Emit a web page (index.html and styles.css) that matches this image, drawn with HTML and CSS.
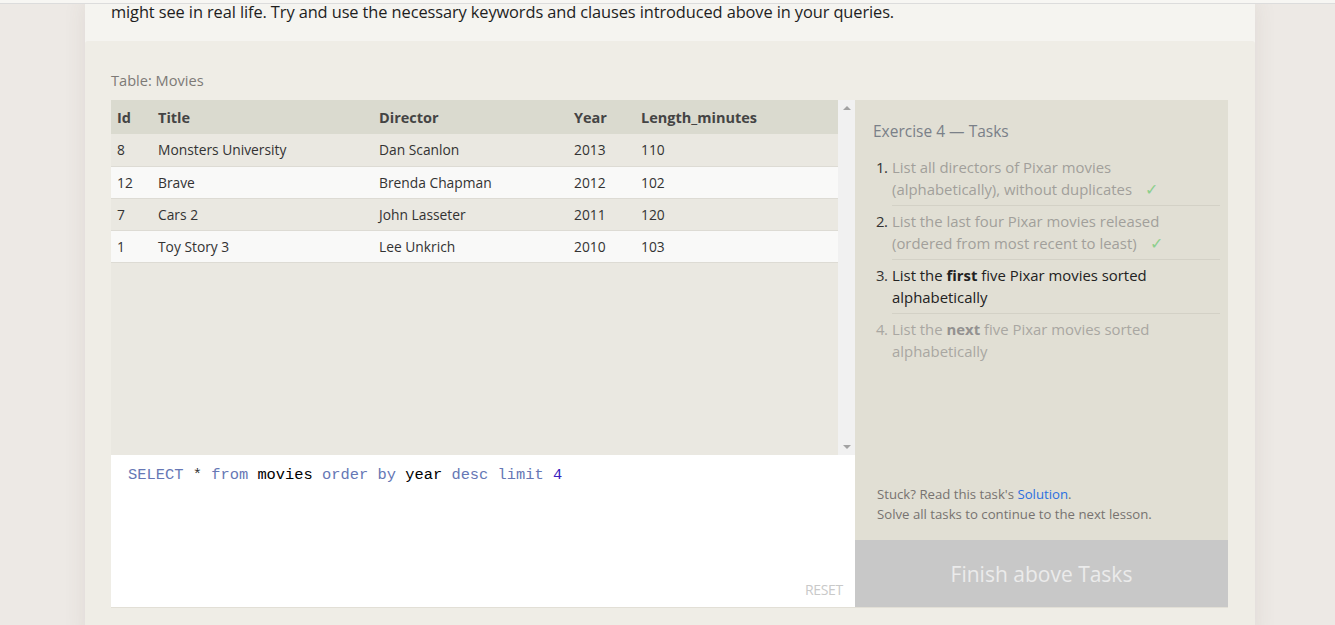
FILE: index.html
```html
<!DOCTYPE html>
<html>
<head>
<meta charset="utf-8">
<link rel="stylesheet" href="styles.css">
</head>
<body>
<div class="topbar"></div>
<div class="page">
  <p class="intro">might see in real life. Try and use the necessary keywords and clauses introduced above in your queries.</p>
  <section class="exercise">
    <div class="table-label">Table: Movies</div>
    <div class="workspace">
      <div class="left">
        <div class="results">
          <div class="table-wrap">
            <table class="movies">
              <thead>
                <tr><th class="c-id">Id</th><th class="c-title">Title</th><th class="c-dir">Director</th><th class="c-year">Year</th><th>Length_minutes</th></tr>
              </thead>
              <tbody>
                <tr><td>8</td><td>Monsters University</td><td>Dan Scanlon</td><td>2013</td><td>110</td></tr>
                <tr><td>12</td><td>Brave</td><td>Brenda Chapman</td><td>2012</td><td>102</td></tr>
                <tr><td>7</td><td>Cars 2</td><td>John Lasseter</td><td>2011</td><td>120</td></tr>
                <tr><td>1</td><td>Toy Story 3</td><td>Lee Unkrich</td><td>2010</td><td>103</td></tr>
              </tbody>
            </table>
          </div>
          <div class="scrollbar">
            <span class="arrow up"></span>
            <span class="arrow down"></span>
          </div>
        </div>
        <div class="editor">
          <div class="code"><span class="kw">SELECT</span> <span class="op">*</span> <span class="kw">from</span> <span class="id">movies</span> <span class="kw">order by</span> <span class="id">year</span> <span class="kw">desc</span> <span class="kw">limit</span> <span class="num">4</span></div>
          <div class="reset">RESET</div>
        </div>
      </div>
      <aside class="tasks">
        <div class="tasks-body">
          <h2 class="tasks-title">Exercise 4 — Tasks</h2>
          <ol class="task-list">
            <li class="done"><span class="n">1.</span><span class="t">List all directors of Pixar movies<br>(alphabetically), without duplicates <span class="check">✓</span></span></li>
            <li class="done"><span class="n">2.</span><span class="t">List the last four Pixar movies released<br>(ordered from most recent to least) <span class="check">✓</span></span></li>
            <li class="current"><span class="n">3.</span><span class="t">List the <b>first</b> five Pixar movies sorted<br>alphabetically</span></li>
            <li class="todo"><span class="n">4.</span><span class="t">List the <b>next</b> five Pixar movies sorted<br>alphabetically</span></li>
          </ol>
          <div class="help">
            <div>Stuck? Read this task's <a class="link">Solution</a>.</div>
            <div>Solve all tasks to continue to the next lesson.</div>
          </div>
        </div>
        <div class="finish">Finish above Tasks</div>
      </aside>
    </div>
  </section>
</div>
</body>
</html>
```

FILE: styles.css
```css
* { box-sizing: border-box; }
html, body {
  margin: 0;
  padding: 0;
  height: 100%;
  overflow: hidden;
}
body {
  background: #ede9e5;
  font-family: "Open Sans", "Noto Sans", sans-serif;
  color: #222;
}
.topbar {
  position: fixed;
  top: 0;
  left: 0;
  right: 0;
  height: 4px;
  background: #f7f6f3;
  border-bottom: 1px solid #dcdcdc;
  z-index: 5;
}
.page {
  width: 1170px;
  margin-left: 85px;
  background: #f5f4f0;
  box-shadow: 0 0 22px rgba(90, 70, 60, 0.09);
  min-height: 100%;
}
.intro {
  margin: 0;
  padding: 0 26px;
  height: 41px;
  font-size: 16.4px;
  line-height: 24px;
  color: #1e1e1e;
  letter-spacing: -0.1px;
  white-space: nowrap;
}
.exercise {
  background: #efede6;
  padding: 29px 27px 0 26px;
  border-radius: 3px 3px 0 0;
  min-height: 600px;
}
.table-label {
  font-size: 14.6px;
  line-height: 20px;
  color: #7d7a76;
  margin-bottom: 10px;
}
.workspace {
  display: flex;
  height: 508px;
  border-bottom: 1px solid #e2dfd6;
}
.left {
  width: 744px;
  display: flex;
  flex-direction: column;
}
.results {
  display: flex;
  height: 355px;
  background: #eae8e1;
}
.table-wrap {
  flex: 1;
}
.movies {
  width: 100%;
  border-collapse: collapse;
  font-size: 13.8px;
  color: #333;
}
.movies th {
  background: #dadacf;
  text-align: left;
  font-weight: 700;
  color: #444;
  height: 34px;
  padding: 1px 6px 0;
  font-size: 14.5px;
}
.movies td {
  height: 32px;
  padding: 0 6px;
  border-bottom: 1px solid #dddbd4;
}
.movies tbody tr:nth-child(odd) td { background: #eae8e1; }
.movies tbody tr:nth-child(even) td { background: #f9f9f8; }
.c-id { width: 41px; }
.c-title { width: 221px; }
.c-dir { width: 195px; }
.c-year { width: 67px; }
.scrollbar {
  width: 17px;
  background: #f1f1f1;
  display: flex;
  flex-direction: column;
  justify-content: space-between;
  align-items: center;
  padding: 6px 0 6px;
}
.arrow {
  width: 0;
  height: 0;
  border-left: 4px solid transparent;
  border-right: 4px solid transparent;
}
.arrow.up { border-bottom: 4px solid #a3a3a3; }
.arrow.down { border-top: 4px solid #a3a3a3; }
.editor {
  flex: 1;
  background: #fff;
  position: relative;
  padding: 10px 17px;
}
.code {
  font-family: "Liberation Mono", "DejaVu Sans Mono", monospace;
  font-size: 15.4px;
  line-height: 20px;
  color: #000;
}
.kw { color: #6677b5; }
.op { color: #333; }
.id { color: #000; }
.num { color: #3a1fc0; }
.reset {
  position: absolute;
  right: 12px;
  bottom: 8px;
  font-size: 14px;
  color: #c9c9c9;
  letter-spacing: -0.3px;
}
.tasks {
  width: 373px;
  background: #e1dfd4;
  display: flex;
  flex-direction: column;
}
.tasks-body {
  flex: 1;
  padding: 20px 8px 0 18px;
  display: flex;
  flex-direction: column;
}
.tasks-title {
  margin: 0 0 14px;
  font-size: 15.5px;
  line-height: 22px;
  font-weight: 400;
  color: #7a8088;
}
.task-list {
  list-style: none;
  margin: 0;
  padding: 0;
  font-size: 14.9px;
  line-height: 22px;
}
.task-list li {
  display: flex;
  padding-left: 3px;
  margin-bottom: 4px;
}
.task-list li .t {
  flex: 1;
  padding-bottom: 5px;
  border-bottom: 1px solid #d3d1c6;
  white-space: nowrap;
}
.task-list li:last-child .t { border-bottom: 0; }
.n { width: 16px; flex: none; color: #333; letter-spacing: -0.5px; }
.done .t { color: #a19f9b; }
.current .t { color: #222; }
.current b { color: #222; }
.todo .n, .todo .t { color: #a9a7a2; }
.done b, .todo b { color: #939190; }
.check {
  color: #8dcf8d;
  font-size: 16px;
  margin-left: 9px;
}
.help {
  margin-top: auto;
  padding: 0 0 16px 4px;
  font-size: 13.2px;
  line-height: 20px;
  color: #777370;
}
.link { color: #2a6fe0; }
.finish {
  height: 67px;
  background: #c8c8c8;
  color: #ebebeb;
  font-size: 21px;
  display: flex;
  align-items: center;
  justify-content: center;
  padding-top: 1px;
}
```
